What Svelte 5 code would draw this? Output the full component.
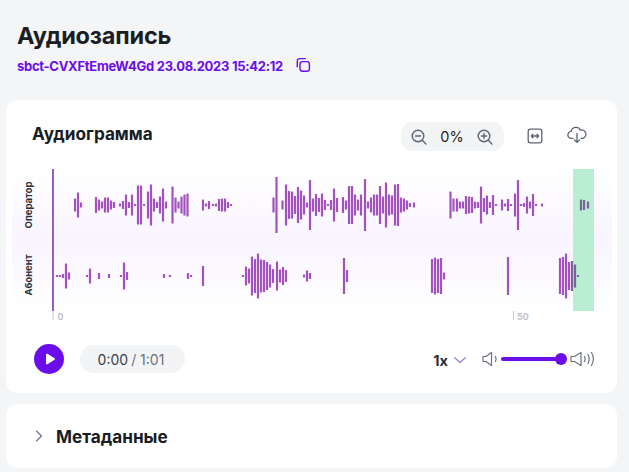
<script>
	const operator = [
		[75, 12], [78, 24], [81, 4],
		[96, 15], [99, 10], [102, 6], [105, 14], [108, 14], [111, 8], [114, 5],
		[120, 2], [123, 7], [126, 20], [129, 5], [132, 20], [135, 1], [138, 38], [141, 38], [144, 1],
		[148, 26], [151, 40], [154, 12], [157, 5], [160, 16], [163, 32], [166, 6],
		[172.5, 36], [175.5, 14], [178.5, 6], [181.5, 16], [184.5, 20], [187.5, 22],
		[203, 10], [206, 2], [209, 7], [213, 1], [216, 2], [219, 11], [222, 12], [225, 12], [228, 5], [231, 1],
		[273.5, 14], [276.5, 55], [282.5, 8], [286, 40], [289, 27], [292, 26], [295, 17], [298, 35], [301, 28],
		[304, 18], [307, 4], [310, 49], [313, 12], [316, 21], [319, 13], [322, 22], [325, 9], [328, 1], [331, 9],
		[334, 32], [337, 13], [343, 15], [346, 8], [349, 37], [352, 37], [355, 20], [358, 10], [361, 20], [365, 51],
		[368, 6], [371, 14], [374, 20], [377, 20], [380, 37], [383, 16], [386, 44], [389, 20], [392, 18], [395, 40],
		[398, 41], [401, 14], [404, 12], [407, 8], [410, 3], [414, 4],
		[450.5, 26], [453.5, 12], [457, 12], [460, 6], [463, 6], [466, 17], [469, 16], [472, 15], [475, 6], [478, 5],
		[481, 36], [484, 13], [487, 18], [490, 5], [493, 19], [496, 1], [502, 10], [505, 2], [508, 11], [511, 1],
		[515, 22], [518, 49], [521, 1], [524, 3], [527, 16], [530, 6], [533, 21], [536, 1], [542, 2],
		[581, 10], [584, 9], [588, 6]
	];

	const subscriber = [
		[57, 1], [60, 1], [63, 3], [66, 24], [69, 6], [87, 1], [90, 14], [99, 5], [109, 3],
		[121, 1], [124, 26], [127, 7], [164, 3], [170, 1], [188, 5], [191, 1], [203, 19],
		[243, 1], [246, 18], [249, 14], [252, 38], [255, 33], [258, 44], [261, 32], [264, 31], [267, 27],
		[270, 22], [273, 13], [277, 28], [280, 12], [283, 17], [286, 11], [304, 2], [307, 10], [310, 5],
		[344, 35], [347, 11], [432, 33], [435, 36], [438, 33], [441, 35], [444, 6], [508, 37],
		[560, 35], [563, 37], [566, 44], [569, 27], [572, 29], [575, 22], [578, 1]
	];

	const barColor = (x) => (x >= 572 ? '#7a6398' : '#a252bf');
</script>

<main>
	<header class="page-head">
		<h1>Аудиозапись</h1>
		<div class="record-id">
			<span>sbct-CVXFtEmeW4Gd 23.08.2023 15:42:12</span>
			<svg width="16" height="16" viewBox="0 0 16 16" fill="none" stroke="#6a0dea" stroke-width="1.4" aria-hidden="true">
				<rect x="5" y="4.6" width="9.4" height="9.6" rx="2.4" />
				<path d="M2.3 9.8V4.2a2.6 2.6 0 0 1 2.6-2.6h5.4" stroke-linecap="round" />
			</svg>
		</div>
	</header>

	<section class="card audio">
		<div class="toolbar">
			<h2>Аудиограмма</h2>
			<div class="tools">
				<div class="zoom">
					<svg width="18" height="18" viewBox="0 0 18 18" fill="none" stroke="#5b6472" stroke-width="1.4" stroke-linecap="round">
						<circle cx="8" cy="8" r="5.8" /><path d="M5.4 8h5.2M12.3 12.3l3.6 3.6" />
					</svg>
					<span>0%</span>
					<svg width="18" height="18" viewBox="0 0 18 18" fill="none" stroke="#5b6472" stroke-width="1.4" stroke-linecap="round">
						<circle cx="8" cy="8" r="5.8" /><path d="M5.4 8h5.2M8 5.4v5.2M12.3 12.3l3.6 3.6" />
					</svg>
				</div>
				<svg class="fit" width="16" height="16" viewBox="0 0 16 16" fill="none" stroke="#5b6472" stroke-width="1.3" stroke-linecap="round" stroke-linejoin="round">
					<rect x="1.2" y="1.2" width="13.6" height="13.6" rx="2.2" />
					<path d="M4.4 8h7.2M6 6.3 4.3 8 6 9.7M10 6.3 11.7 8 10 9.7" />
				</svg>
				<svg class="cloud" width="20" height="18" viewBox="0 0 20 18" fill="none" stroke="#5b6472" stroke-width="1.3" stroke-linecap="round" stroke-linejoin="round">
					<path d="M6 12.4H4.6a3.5 3.5 0 0 1-.5-7 5 5 0 0 1 9.4-1.3 4.2 4.2 0 0 1 2.2 8.3H14" />
					<path d="M10 7.4v9M7.6 14l2.4 2.4 2.4-2.4" />
				</svg>
			</div>
		</div>

		<svg class="chart" width="611" height="155" viewBox="6 169 611 155" aria-label="Аудиограмма">
			<defs>
				<linearGradient id="band" x1="0" y1="0" x2="0" y2="1">
					<stop offset="0" stop-color="#ffffff" />
					<stop offset="0.5" stop-color="#f9f4fe" />
					<stop offset="1" stop-color="#ffffff" />
				</linearGradient>
			</defs>
			<rect x="12" y="169" width="600" height="142" fill="url(#band)" />
			<rect x="573" y="169" width="21" height="142" fill="#b9eed3" />
			<rect x="52" y="169" width="2" height="142" fill="#8f5fc4" />
			<rect x="52.5" y="311" width="1" height="9" fill="#c9c9d2" />
			<rect x="513" y="311" width="1" height="9" fill="#c9c9d2" />

			{#each operator as [x, h]}
				<rect x={x - 1.1} y={204.5 - h / 2} width="2.2" height={h + 1} rx="0.5" fill={barColor(x)} />
			{/each}
			{#each subscriber as [x, h]}
				<rect x={x - 1.1} y={275.5 - h / 2} width="2.2" height={h + 1} rx="0.5" fill={barColor(x)} />
			{/each}

			<text class="track" transform="translate(31.5 205) rotate(-90)">Оператор</text>
			<text class="track" transform="translate(31.5 275) rotate(-90)">Абонент</text>
			<text class="tick" x="57.5" y="320">0</text>
			<text class="tick" x="517" y="320">50</text>
		</svg>

		<div class="controls">
			<button class="play" type="button" aria-label="Воспроизвести">
				<svg width="12" height="12" viewBox="0 0 12 12"><path d="M2 1.6c0-.8.8-1.2 1.5-.8l7 4.4c.6.4.6 1.2 0 1.6l-7 4.4c-.7.4-1.5 0-1.5-.8z" fill="#fff" /></svg>
			</button>
			<div class="time"><b>0:00</b><span>/ 1:01</span></div>
			<div class="right">
				<strong>1x</strong>
				<svg class="speed" width="14" height="8" viewBox="0 0 14 8" fill="none" stroke="#9a78d8" stroke-width="1.1" stroke-linecap="round" stroke-linejoin="round"><path d="M1.5 1.5 7 6.5l5.5-5" /></svg>
				<svg class="vol-low" width="16" height="16" viewBox="0 0 16 16" fill="none" stroke="#6b7280" stroke-width="1.2" stroke-linejoin="round" stroke-linecap="round">
					<path d="M1 5.5h3L9.5 1.5v13L4 10.500H1z" /><path d="M13.5 5.5c.8 1.6.8 3.4 0 5" />
				</svg>
				<div class="slider"><i></i></div>
				<svg class="vol-high" width="25" height="16" viewBox="0 0 25 16" fill="none" stroke="#6b7280" stroke-width="1.2" stroke-linejoin="round" stroke-linecap="round">
					<path d="M1 5.5h3.5L11 1.5v13L4.500 10.500H1z" /><path d="M14.5 5.5c.8 1.6.8 3.4 0 5M18 3.5c1.5 2.8 1.5 6.200 0 9M21.5 1.5c2.300 4 2.300 9 0 13" />
				</svg>
			</div>
		</div>
	</section>

	<section class="card meta">
		<svg width="8" height="12" viewBox="0 0 8 12" fill="none" stroke="#6b7280" stroke-width="1.1" stroke-linecap="round" stroke-linejoin="round"><path d="M1.5 1 6.5 6l-5 5" /></svg>
		<h2>Метаданные</h2>
	</section>
</main>

<style>
	:global(body) {
		background: #f4f5f7;
		overflow: hidden;
	}

	main {
		box-sizing: border-box;
		width: 629px;
		height: 472px;
		padding: 21px 12px 0 6px;
		font-family: Inter, 'Liberation Sans', sans-serif;
		color: #1a1d24;
	}

	.page-head {
		padding-left: 11px;
		height: 79px;
	}

	h1 {
		margin: 0;
		font-size: 23.5px;
		font-weight: 700;
		line-height: 29px;
		letter-spacing: -0.2px;
	}

	.record-id {
		display: flex;
		align-items: center;
		gap: 12px;
		margin-top: 8px;
		color: #6a0dea;
		font-size: 13px;
		font-weight: 700;
		line-height: 16px;
		letter-spacing: -0.28px;
	}

	.record-id svg {
		margin-top: -3px;
	}

	.card {
		background: #fff;
		border-radius: 12px;
	}

	.audio {
		padding: 22px 0 19px;
	}

	.toolbar {
		display: flex;
		align-items: center;
		justify-content: space-between;
		height: 29px;
		padding: 0 30px 0 26px;
	}

	h2 {
		margin: 0;
		font-size: 17.2px;
		font-weight: 700;
		line-height: 20px;
	}

	.toolbar h2 {
		margin-top: -6px;
	}

	.tools {
		display: flex;
		align-items: center;
	}

	.zoom {
		display: flex;
		align-items: center;
		justify-content: space-between;
		box-sizing: border-box;
		width: 103px;
		height: 29px;
		padding: 0 10px 0 9px;
		border-radius: 12px;
		background: #f3f4f6;
		font-size: 14.5px;
	}

	.fit {
		margin: -2px 0 0 23px;
	}

	.cloud {
		margin: -4px 0 0 24px;
	}

	.chart {
		display: block;
		margin-top: 18px;
	}

	.track {
		font-size: 9.5px;
		font-weight: 700;
		text-anchor: middle;
		fill: #2b2f38;
	}

	.tick {
		font-size: 9px;
		font-weight: 600;
		fill: #b9bcc6;
	}

	.controls {
		display: flex;
		align-items: center;
		height: 30px;
		margin-top: 20px;
		padding: 0 22px 0 28px;
	}

	.play {
		display: grid;
		place-items: center;
		width: 30px;
		height: 30px;
		padding: 0 0 0 2px;
		border: 0;
		border-radius: 50%;
		background: #6a0dea;
	}

	.time {
		display: flex;
		gap: 3px;
		align-items: center;
		justify-content: center;
		box-sizing: border-box;
		width: 105px;
		height: 28px;
		margin-left: 16px;
		padding-right: 3px;
		border-radius: 14px;
		background: #f3f4f6;
		font-size: 14px;
		color: #6b7280;
	}

	.time b {
		color: #3a3f4a;
		font-weight: 400;
	}

	.right {
		display: flex;
		align-items: center;
		margin-left: auto;
	}

	.right strong {
		font-size: 14.5px;
		font-weight: 700;
		color: #2b2f38;
		margin-top: 2px;
	}

	.speed {
		margin: 2px 0 0 5px;
	}

	.vol-low {
		margin-left: 15px;
	}

	.slider {
		position: relative;
		width: 65px;
		height: 4px;
		margin: 0 4px 0 3px;
		border-radius: 2px;
		background: #6a0dea;
	}

	.slider i {
		position: absolute;
		top: -4px;
		right: -1px;
		width: 12px;
		height: 12px;
		border-radius: 50%;
		background: #6a0dea;
	}

	.meta {
		display: flex;
		align-items: center;
		gap: 13px;
		height: 64px;
		margin-top: 11px;
		padding-left: 29px;
	}

	.meta h2 {
		margin-top: 1px;
	}
</style>
